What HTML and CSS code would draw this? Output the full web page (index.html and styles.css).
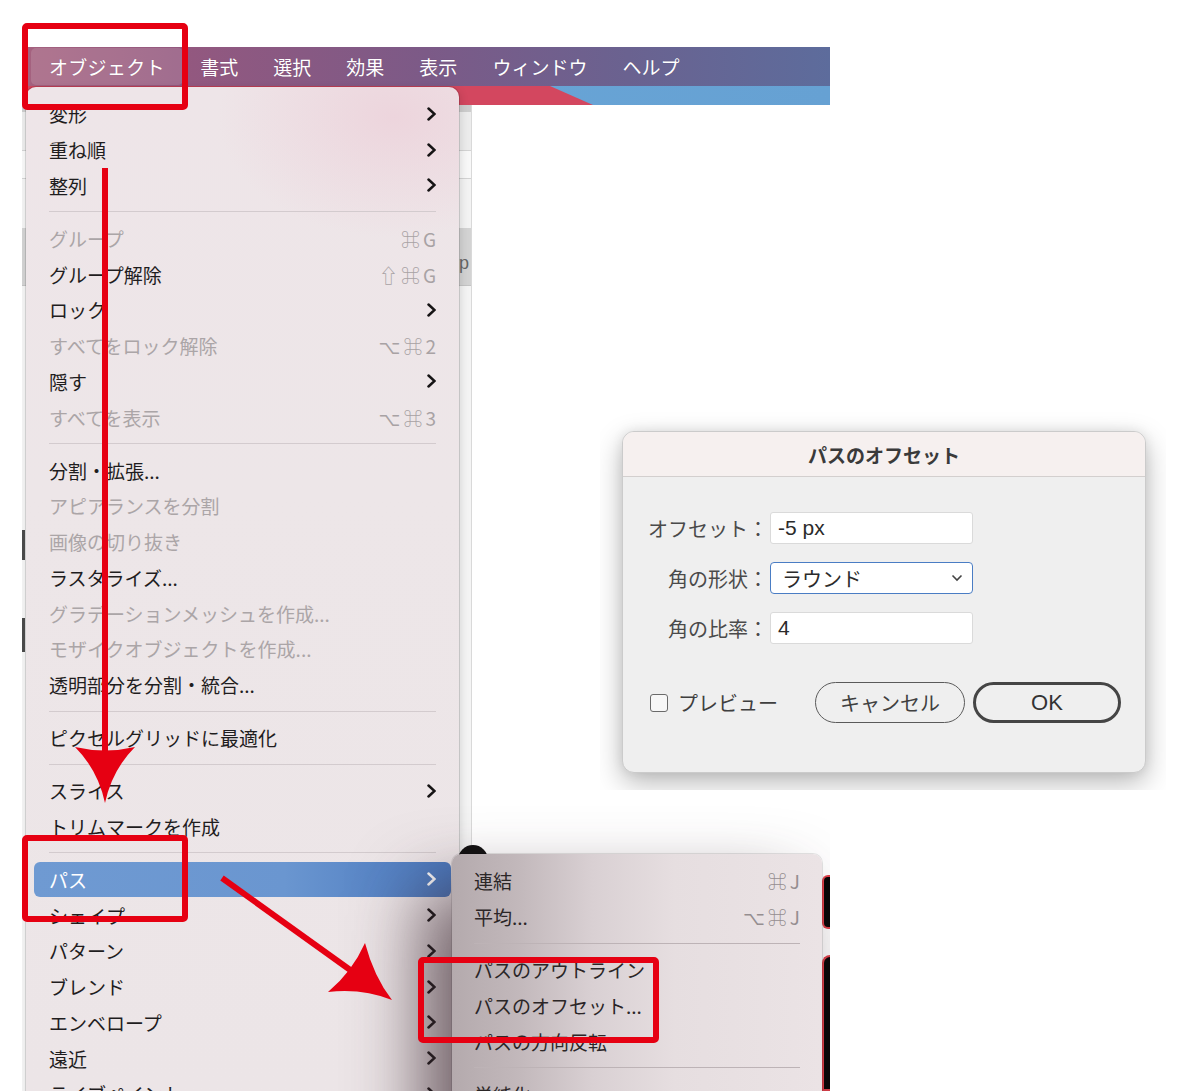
FILE: index.html
```html
<!DOCTYPE html>
<html lang="ja">
<head>
    <meta charset="UTF-8">
    <title>パスのオフセット</title>
    <link rel="stylesheet" href="styles.css">
</head>
<body>
<div class="canvas">

    <!-- app capture with the open Object menu -->
    <div class="capture">
        <div class="menubar">
            <div class="menubar-item open">オブジェクト</div>
            <div class="menubar-item">書式</div>
            <div class="menubar-item">選択</div>
            <div class="menubar-item">効果</div>
            <div class="menubar-item">表示</div>
            <div class="menubar-item">ウィンドウ</div>
            <div class="menubar-item">ヘルプ</div>
        </div>
        <div class="band"><div class="band-red"></div></div>
        <div class="workspace">
            <div class="panel">
                <div class="panel-head"></div>
                <div class="panel-row tall"></div>
                <div class="panel-row"></div>
                <div class="panel-row mid"></div>
                <div class="panel-tab">Grp</div>
                <div class="panel-fill">
                    <div class="tick first"></div>
                    <div class="tick"></div>
                </div>
            </div>
            <div class="doc">
                <div class="art-dot"></div>
                <div class="art-block top"></div>
                <div class="art-block bottom"></div>
            </div>
        </div>

        <div class="menu main-menu">
            <div class="item"><span class="label">変形</span><svg class="chev" width="9" height="14" viewBox="0 0 9 14"><polyline points="1.5,1.5 7.5,7 1.5,12.5"/></svg></div>
            <div class="item"><span class="label">重ね順</span><svg class="chev" width="9" height="14" viewBox="0 0 9 14"><polyline points="1.5,1.5 7.5,7 1.5,12.5"/></svg></div>
            <div class="item"><span class="label">整列</span><svg class="chev" width="9" height="14" viewBox="0 0 9 14"><polyline points="1.5,1.5 7.5,7 1.5,12.5"/></svg></div>
            <div class="sep"></div>
            <div class="item dis"><span class="label">グループ</span><span class="key">⌘G</span></div>
            <div class="item"><span class="label">グループ解除</span><span class="key">⇧⌘G</span></div>
            <div class="item"><span class="label">ロック</span><svg class="chev" width="9" height="14" viewBox="0 0 9 14"><polyline points="1.5,1.5 7.5,7 1.5,12.5"/></svg></div>
            <div class="item dis"><span class="label">すべてをロック解除</span><span class="key">⌥⌘2</span></div>
            <div class="item"><span class="label">隠す</span><svg class="chev" width="9" height="14" viewBox="0 0 9 14"><polyline points="1.5,1.5 7.5,7 1.5,12.5"/></svg></div>
            <div class="item dis"><span class="label">すべてを表示</span><span class="key">⌥⌘3</span></div>
            <div class="sep"></div>
            <div class="item"><span class="label">分割・拡張...</span></div>
            <div class="item dis"><span class="label">アピアランスを分割</span></div>
            <div class="item dis"><span class="label">画像の切り抜き</span></div>
            <div class="item"><span class="label">ラスタライズ...</span></div>
            <div class="item dis"><span class="label">グラデーションメッシュを作成...</span></div>
            <div class="item dis"><span class="label">モザイクオブジェクトを作成...</span></div>
            <div class="item"><span class="label">透明部分を分割・統合...</span></div>
            <div class="sep"></div>
            <div class="item"><span class="label">ピクセルグリッドに最適化</span></div>
            <div class="sep"></div>
            <div class="item"><span class="label">スライス</span><svg class="chev" width="9" height="14" viewBox="0 0 9 14"><polyline points="1.5,1.5 7.5,7 1.5,12.5"/></svg></div>
            <div class="item"><span class="label">トリムマークを作成</span></div>
            <div class="sep"></div>
            <div class="item active"><span class="label">パス</span><svg class="chev" width="9" height="14" viewBox="0 0 9 14"><polyline points="1.5,1.5 7.5,7 1.5,12.5"/></svg></div>
            <div class="item"><span class="label">シェイプ</span><svg class="chev" width="9" height="14" viewBox="0 0 9 14"><polyline points="1.5,1.5 7.5,7 1.5,12.5"/></svg></div>
            <div class="item"><span class="label">パターン</span><svg class="chev" width="9" height="14" viewBox="0 0 9 14"><polyline points="1.5,1.5 7.5,7 1.5,12.5"/></svg></div>
            <div class="item"><span class="label">ブレンド</span><svg class="chev" width="9" height="14" viewBox="0 0 9 14"><polyline points="1.5,1.5 7.5,7 1.5,12.5"/></svg></div>
            <div class="item"><span class="label">エンベロープ</span><svg class="chev" width="9" height="14" viewBox="0 0 9 14"><polyline points="1.5,1.5 7.5,7 1.5,12.5"/></svg></div>
            <div class="item"><span class="label">遠近</span><svg class="chev" width="9" height="14" viewBox="0 0 9 14"><polyline points="1.5,1.5 7.5,7 1.5,12.5"/></svg></div>
            <div class="item"><span class="label">ライブペイント</span><svg class="chev" width="9" height="14" viewBox="0 0 9 14"><polyline points="1.5,1.5 7.5,7 1.5,12.5"/></svg></div>
        </div>

        <div class="menu submenu">
            <div class="item"><span class="label">連結</span><span class="key">⌘J</span></div>
            <div class="item"><span class="label">平均...</span><span class="key">⌥⌘J</span></div>
            <div class="sep"></div>
            <div class="item"><span class="label">パスのアウトライン</span></div>
            <div class="item"><span class="label">パスのオフセット...</span></div>
            <div class="item"><span class="label">パスの方向反転</span></div>
            <div class="sep"></div>
            <div class="item"><span class="label">単純化...</span></div>
        </div>
    </div>

    <!-- dialog capture -->
    <div class="dialog-shot">
        <div class="dialog">
            <div class="dialog-title">パスのオフセット</div>
            <div class="dialog-body">
                <div class="form">
                    <div class="form-label">オフセット：</div>
                    <div class="field latin">-5 px</div>
                    <div class="form-label">角の形状：</div>
                    <div class="field select">
                        <span>ラウンド</span>
                        <svg width="12" height="8" viewBox="0 0 12 8"><polyline points="1.5,1.5 6,6 10.5,1.5"/></svg>
                    </div>
                    <div class="form-label">角の比率：</div>
                    <div class="field latin">4</div>
                </div>
                <div class="actions">
                    <span class="checkbox"></span>
                    <span class="check-label">プレビュー</span>
                    <button class="btn cancel">キャンセル</button>
                    <button class="btn ok">OK</button>
                </div>
            </div>
        </div>
    </div>

    <!-- red annotations -->
    <svg class="marks" width="1200" height="1091" viewBox="0 0 1200 1091">
        <g fill="none" stroke="#e60012" stroke-width="6">
            <rect x="25" y="26" width="160" height="81" rx="2"/>
            <rect x="25" y="838" width="160" height="81" rx="2"/>
            <rect x="421" y="960" width="235" height="80" rx="2"/>
            <line x1="105" y1="168" x2="105" y2="762"/>
            <line x1="222" y1="878" x2="360" y2="977"/>
        </g>
        <g fill="#e60012">
            <path d="M75 747 Q105 754 135 747 Q112 770 105 803 Q98 770 75 747 Z"/>
            <path d="M365 943 Q374 977 392 1000 Q362 988 328 992 Q352 972 365 943 Z"/>
        </g>
    </svg>
</div>
</body>
</html>
```

FILE: styles.css
```css
* {
    box-sizing: border-box;
}
body {
    margin: 0;
    background: #fff;
    font-family: "Noto Sans CJK JP", "DejaVu Sans", sans-serif;
}
.canvas {
    position: relative;
    width: 1200px;
    height: 1091px;
    overflow: hidden;
    background: #fff;
}

/* app capture */
.capture {
    position: absolute;
    left: 22px;
    top: 47px;
    width: 808px;
    height: 1044px;
    overflow: hidden;
    display: flex;
    flex-direction: column;
    background: #fff;
}
.menubar {
    height: 39px;
    flex: none;
    display: flex;
    align-items: center;
    padding-left: 8.5px;
    background: linear-gradient(90deg, #a5627f 0%, #93587f 20%, #7c5a87 50%, #6a6290 75%, #5d6c9c 100%);
    color: #fff;
    font-size: 19px;
}
.menubar-item {
    padding: 0 17.5px;
    height: 37px;
    display: flex;
    align-items: center;
    white-space: nowrap;
    text-shadow: 0 0 1px rgba(0,0,0,0.15);
}
.menubar-item.open {
    padding: 0 18px 0 18.5px;
    letter-spacing: 0.3px;
    background: rgba(255,255,255,0.13);
    border-radius: 5px;
}
.band {
    height: 19px;
    flex: none;
    background: linear-gradient(90deg, #6aa8d9, #66a1d3);
}
.band-red {
    height: 100%;
    background: #d3475f;
    clip-path: polygon(0 0, 528px 0, 571px 100%, 0 100%);
}
.workspace {
    flex: 1;
    display: flex;
}
.panel {
    width: 450px;
    flex: none;
    display: flex;
    flex-direction: column;
    background: #f2f2f2;
    border-right: 1px solid #d9d9d9;
}
.panel-head {
    height: 7px;
    background: #cdcdcd;
}
.panel-row {
    height: 28px;
    background: #f8f8f8;
    border-bottom: 1px solid #d3d3d3;
}
.panel-row.tall {
    height: 39px;
    background: #ececec;
}
.panel-row.mid {
    height: 49px;
    background: #f3f3f3;
    border-bottom: none;
}
.panel-tab {
    height: 58px;
    background: #d3d3d3;
    color: #666;
    font-family: "Liberation Sans", sans-serif;
    font-size: 18px;
    text-align: right;
    padding: 25px 2px 0 0;
    border-bottom: 1px solid #c4c4c4;
}
.panel-fill {
    flex: 1;
    background: #f4f4f4;
}
.tick {
    width: 3px;
    height: 34px;
    margin-top: 58px;
    background: #4b4b4b;
}
.tick.first {
    height: 30px;
    margin-top: 244px;
}
.doc {
    flex: 1;
    position: relative;
    background: #fff;
}
.art-dot {
    position: absolute;
    left: -14px;
    top: 740px;
    width: 30px;
    height: 30px;
    border-radius: 50%;
    background: #111;
}
.art-block {
    position: absolute;
    right: 0;
    width: 8px;
    background: #050505;
    border: 2px solid #e0404a;
    border-right: none;
}
.art-block.top {
    top: 770px;
    height: 54px;
    border-radius: 6px 0 0 6px;
}
.art-block.bottom {
    top: 850px;
    bottom: 0;
    border-radius: 10px 0 0 0;
}

/* menus */
.menu {
    position: absolute;
    padding: 9px 8px;
    font-size: 19px;
}
.main-menu {
    left: 4px;
    top: 40px;
    width: 433px;
    height: 1010px;
    border-radius: 10px 10px 0 0;
    background:
        radial-gradient(ellipse 220px 150px at 85% 3%, rgba(236,202,213,0.6), rgba(236,202,213,0) 80%),
        linear-gradient(180deg, #eee5e8 0%, #ede6e8 40%, #ece5e7 100%);
    box-shadow: 0 0 0 1px rgba(0,0,0,0.12), 2px 2px 8px rgba(0,0,0,0.12);
}
.submenu {
    left: 430px;
    top: 807px;
    width: 370px;
    height: 300px;
    border-radius: 9px 9px 0 0;
    background: linear-gradient(90deg, #b4aaad 0%, #c2b8bb 18%, #d9d0d3 38%, #e6dee0 60%, #ebe3e5 100%);
    box-shadow: 0 0 0 1px rgba(0,0,0,0.1), -30px 36px 70px rgba(60,40,48,0.7);
}
.item {
    height: 35.75px;
    display: flex;
    align-items: center;
    padding: 0 15px;
    color: #1f1d1e;
    white-space: nowrap;
}
.submenu .item {
    padding: 0 14px;
    color: #2b2627;
}
.item .label {
    flex: 1;
}
.item.dis {
    color: #aba5a7;
}
.item.active {
    background: linear-gradient(90deg, #6f9ad2 0%, #6a96d0 60%, #4a78be 100%);
    color: #fff;
    border-radius: 6px;
}
.key {
    color: #a8a2a4;
    letter-spacing: 3px;
    margin-right: -3px;
    font-family: "Noto Sans CJK JP", "DejaVu Sans", sans-serif;
}
.submenu .key {
    color: #958e90;
}
.chev {
    fill: none;
    stroke: #161415;
    stroke-width: 2.5;
    stroke-linecap: round;
    stroke-linejoin: miter;
}
.item.active .chev {
    stroke: #fff;
}
.sep {
    height: 17.25px;
    display: flex;
    align-items: center;
    padding: 0 15px;
}
.submenu .sep {
    padding: 0 14px;
}
.sep::after {
    content: "";
    flex: 1;
    height: 1px;
    background: #d3cbce;
}
.submenu .sep::after {
    background: #bdb3b6;
}

/* dialog capture */
.dialog-shot {
    position: absolute;
    left: 600px;
    top: 410px;
    width: 566px;
    height: 380px;
    overflow: hidden;
    background: #fff;
}
.dialog {
    margin: 21px 0 0 22px;
    width: 524px;
    height: 342px;
    border-radius: 12px;
    border: 1px solid #cbcbcb;
    background: #efefef;
    box-shadow: 0 10px 28px rgba(0,0,0,0.28), 0 0 12px rgba(0,0,0,0.08);
    overflow: hidden;
}
.dialog-title {
    height: 45px;
    display: flex;
    align-items: center;
    justify-content: center;
    background: #f6f0ef;
    border-bottom: 1px solid #d3cfce;
    font-size: 19px;
    font-weight: bold;
    color: #3a3a3a;
}
.dialog-body {
    padding: 35px 24px 0 25px;
}
.form {
    display: grid;
    grid-template-columns: 120px 203px;
    grid-auto-rows: 32px;
    column-gap: 2px;
    row-gap: 18px;
}
.form-label {
    align-self: center;
    text-align: right;
    font-size: 20px;
    color: #4a4a4a;
    white-space: nowrap;
}
.field {
    background: #fff;
    border: 1px solid #dadada;
    border-radius: 3px;
    display: flex;
    align-items: center;
    padding-left: 7px;
    color: #2b2b2b;
}
.field.latin {
    font-family: "Liberation Sans", sans-serif;
    font-size: 21px;
}
.field.select {
    border: 1.5px solid #4a7dc4;
    border-radius: 4px;
    padding: 0 9px 0 11px;
    font-size: 20px;
    justify-content: space-between;
}
.field.select svg {
    fill: none;
    stroke: #444;
    stroke-width: 1.6;
}
.actions {
    margin-top: 38px;
    display: flex;
    align-items: center;
}
.checkbox {
    width: 18px;
    height: 18px;
    margin-left: 2px;
    border: 1.5px solid #6a6a6a;
    border-radius: 3px;
    background: #f7f7f7;
}
.check-label {
    margin-left: 10px;
    font-size: 20px;
    color: #3f3f3f;
}
.btn {
    height: 41px;
    border-radius: 21px;
    background: transparent;
    color: #404040;
    font-family: "Noto Sans CJK JP", sans-serif;
    font-size: 20px;
    padding: 0;
}
.btn.cancel {
    margin-left: auto;
    width: 150px;
    border: 1.5px solid #5a5a5a;
}
.btn.ok {
    margin-left: 8px;
    width: 148px;
    border: 3px solid #454545;
    font-family: "Liberation Sans", sans-serif;
    font-size: 22px;
    color: #333;
}

/* annotation overlay */
.marks {
    position: absolute;
    left: 0;
    top: 0;
    pointer-events: none;
}
```
